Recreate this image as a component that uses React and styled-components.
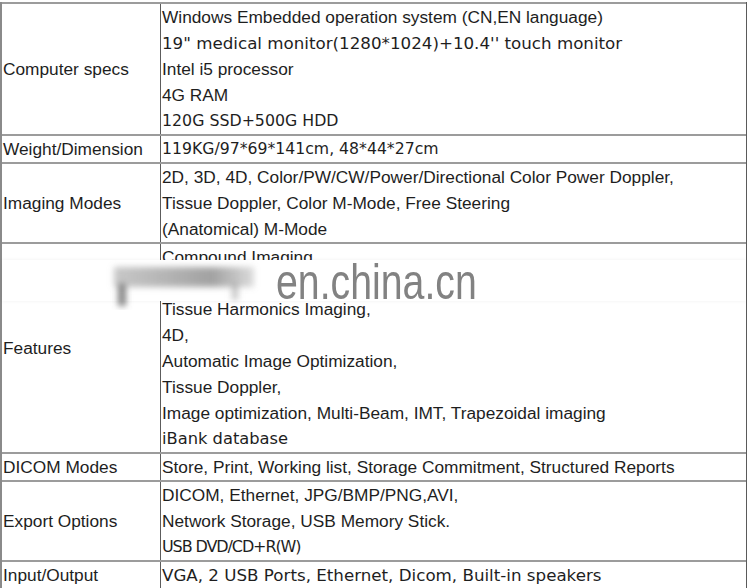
import React from "react";
import styled, { createGlobalStyle } from "styled-components";

const Global = createGlobalStyle`
  html, body { margin: 0; padding: 0; background: #ffffff; }
  body { font-family: "Liberation Sans", Arial, sans-serif; color: #1e1e1e; }
`;

const Page = styled.div`
  padding-top: 2px;
  width: 747px;
  overflow: hidden;
`;

const Table = styled.div`
  position: relative;
  width: 744px;
  border-left: 2px solid #8a8a8a;
  border-right: 2px solid #5a5a5a;
`;

const Row = styled.div`
  display: grid;
  grid-template-columns: 159px 1fr;
  border-top: 2px solid #9c9c9c;
`;

const Label = styled.div`
  display: flex;
  align-items: center;
  padding-left: 1px;
  border-right: 1px solid #5c5c5c;
  font-family: "Liberation Sans", Arial, sans-serif;
  font-size: 17.3px;
  color: #1e1e1e;
  white-space: nowrap;
`;

const Values = styled.div`
  display: flex;
  flex-direction: column;
  padding-left: 1px;
`;

const Line = styled.div`
  height: 26px;
  line-height: 26px;
  white-space: nowrap;
  font-family: ${(p) =>
    p.$wide ? '"DejaVu Sans", Verdana, sans-serif' : '"Liberation Sans", Arial, sans-serif'};
  font-size: ${(p) => p.$size || 17.3}px;
  letter-spacing: ${(p) => p.$track || 0}px;
  color: #1e1e1e;
`;

const Watermark = styled.div`
  position: absolute;
  left: 0;
  right: 0;
  top: 258px;
  height: 41px;
  display: flex;
  align-items: flex-start;
  background: #ffffff;
  box-shadow: 0 0 4px rgba(0, 0, 0, 0.06);
`;

const Smear = styled.svg`
  flex: none;
  margin-left: 104px;
  width: 160px;
  height: 50px;
`;

const Brand = styled.div`
  flex: none;
  margin-left: 10px;
  margin-top: -1px;
  font-family: "Liberation Sans", Arial, sans-serif;
  font-size: 50px;
  line-height: 46px;
  color: #828282;
  transform: scaleX(0.785);
  transform-origin: left top;
  white-space: nowrap;
`;

const rows = [
  {
    label: "Computer specs",
    lines: [
      { t: "Windows Embedded operation system (CN,EN language)" },
      { t: "19\" medical monitor(1280*1024)+10.4'' touch monitor", wide: true, size: 16.7 },
      { t: "Intel i5 processor" },
      { t: "4G RAM" },
      { t: "120G SSD+500G HDD", wide: true, size: 15.8 },
    ],
  },
  {
    label: "Weight/Dimension",
    lines: [{ t: "119KG/97*69*141cm, 48*44*27cm", wide: true, size: 15.7 }],
  },
  {
    label: "Imaging Modes",
    lines: [
      { t: "2D, 3D, 4D, Color/PW/CW/Power/Directional Color Power Doppler," },
      { t: "Tissue Doppler, Color M-Mode, Free Steering" },
      { t: "(Anatomical) M-Mode" },
    ],
  },
  {
    label: "Features",
    lines: [
      { t: "Compound Imaging" },
      { t: "\u00a0" },
      { t: "Tissue Harmonics Imaging," },
      { t: "4D," },
      { t: "Automatic Image Optimization," },
      { t: "Tissue Doppler," },
      { t: "Image optimization, Multi-Beam, IMT, Trapezoidal imaging" },
      { t: "iBank database", wide: true, size: 16.3 },
    ],
  },
  {
    label: "DICOM Modes",
    lines: [{ t: "Store, Print, Working list, Storage Commitment, Structured Reports" }],
  },
  {
    label: "Export Options",
    lines: [
      { t: "DICOM, Ethernet, JPG/BMP/PNG,AVI," },
      { t: "Network Storage, USB Memory Stick." },
      { t: "USB DVD/CD+R(W)", wide: true, size: 16, track: -1.1 },
    ],
  },
  {
    label: "Input/Output",
    lines: [{ t: "VGA, 2 USB Ports, Ethernet, Dicom, Built-in speakers", wide: true, size: 16.7 }],
  },
];

export default function App() {
  return (
    <Page>
      <Global />
      <Table>
        {rows.map((r) => (
          <Row key={r.label}>
            <Label>{r.label}</Label>
            <Values>
              {r.lines.map((l, i) => (
                <Line key={i} $wide={l.wide} $size={l.size} $track={l.track}>
                  {l.t}
                </Line>
              ))}
            </Values>
          </Row>
        ))}
        <Watermark>
          <Smear viewBox="0 0 160 50">
            <defs>
              <filter id="smearBlur" x="-20%" y="-40%" width="140%" height="180%">
                <feGaussianBlur stdDeviation="3" />
              </filter>
              <linearGradient id="smearGrad" x1="0" x2="1" y1="0" y2="0">
                <stop offset="0" stopColor="#9a9a9a" stopOpacity="0.55" />
                <stop offset="0.7" stopColor="#8a8a8a" stopOpacity="0.8" />
                <stop offset="1" stopColor="#8a8a8a" stopOpacity="0.3" />
              </linearGradient>
            </defs>
            <g filter="url(#smearBlur)">
              <rect x="8" y="7" width="140" height="20" fill="url(#smearGrad)" />
              <rect x="12" y="24" width="8" height="22" fill="#6f6f6f" opacity="0.85" />
              <rect x="126" y="24" width="6" height="16" fill="#8a8a8a" opacity="0.5" />
            </g>
          </Smear>
          <Brand>en.china.cn</Brand>
        </Watermark>
      </Table>
    </Page>
  );
}
